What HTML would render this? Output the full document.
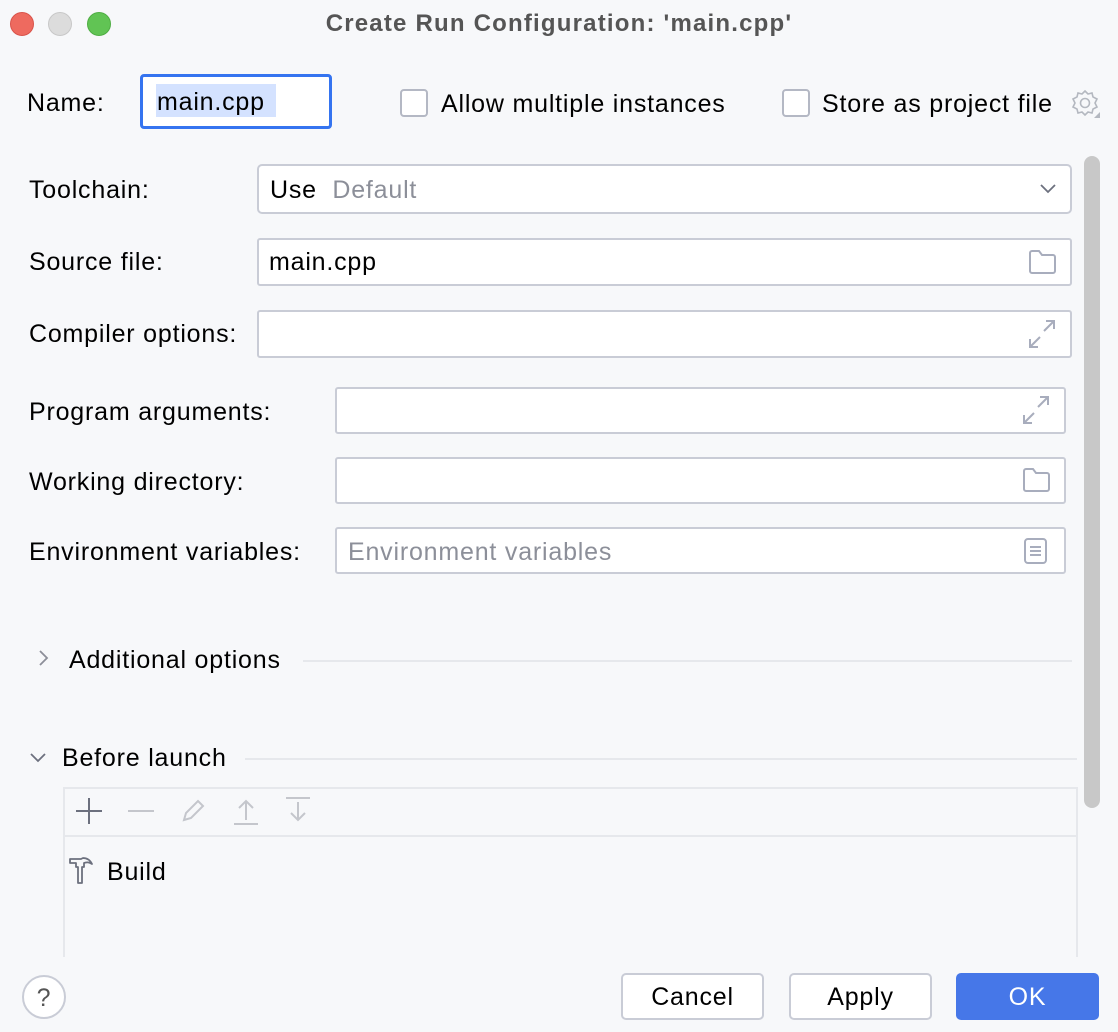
<!DOCTYPE html>
<html><head><meta charset="utf-8"><style>
*{margin:0;padding:0;box-sizing:border-box}
html,body{width:1118px;height:1032px;overflow:hidden;background:#f7f8fa;font-family:"Liberation Sans",sans-serif;font-size:25px;letter-spacing:0.8px;color:#000}
.a{position:absolute}
.t{position:absolute;line-height:30px;white-space:nowrap;margin-top:1px}
.f{position:absolute;background:#fff;border:2px solid #c9ccd6;border-radius:3px}
.g{color:#8c8f99}
.btn{position:absolute;top:973px;width:143px;height:47px;border:2px solid #c9ccd6;border-radius:5px;background:#fff;text-align:center;line-height:45px}
</style></head><body>
<div class="a" style="left:10px;top:12px;width:24px;height:24px;border-radius:50%;background:#ee6a5f;border:1px solid #d9534a"></div>
<div class="a" style="left:48px;top:12px;width:24px;height:24px;border-radius:50%;background:#dcdcdc;border:1px solid #c8c8c8"></div>
<div class="a" style="left:87px;top:12px;width:24px;height:24px;border-radius:50%;background:#61c454;border:1px solid #4fae43"></div>
<div class="t" style="left:0;width:1118px;text-align:center;top:8px;font-weight:bold;color:#555;font-size:24px;letter-spacing:1.2px">Create Run Configuration: 'main.cpp'</div>

<div class="t" style="left:27px;top:87px">Name:</div>
<div class="a" style="left:140px;top:74px;width:192px;height:55px;border:3px solid #3574f0;border-radius:4px;background:#fff"></div>
<div class="a" style="left:156px;top:84px;width:120px;height:33px;background:#d4e2ff"></div>
<div class="t" style="left:157px;top:86px">main.cpp</div>
<div class="a" style="left:400px;top:89px;width:28px;height:28px;border:2px solid #b4b8c4;border-radius:4px;background:#fff"></div>
<div class="t" style="left:441px;top:88px">Allow multiple instances</div>
<div class="a" style="left:782px;top:89px;width:28px;height:28px;border:2px solid #b4b8c4;border-radius:4px;background:#fff"></div>
<div class="t" style="left:822px;top:88px">Store as project file</div>
<svg class="a" style="left:1070px;top:88px" width="30" height="30" viewBox="0 0 30 30"><path d="M15 3l3 3 4-1 1 4 4 2-2 4 2 4-4 2-1 4-4-1-3 3-3-3-4 1-1-4-4-2 2-4-2-4 4-2 1-4 4 1z" fill="none" stroke="#b4b8c0" stroke-width="1.6"/><circle cx="15" cy="15" r="4.5" fill="none" stroke="#b4b8c0" stroke-width="1.6"/><path d="M30 24v6h-6z" fill="#b4b8c0"/></svg>

<div class="t" style="left:29px;top:174px">Toolchain:</div>
<div class="f" style="left:257px;top:164px;width:815px;height:50px;border-radius:5px"></div>
<div class="t" style="left:270px;top:174px">Use&nbsp; <span class="g">Default</span></div>
<svg class="a" style="left:1038px;top:181px" width="20" height="14"><path d="M3 4l7 7 7-7" fill="none" stroke="#6c707e" stroke-width="1.8"/></svg>

<div class="t" style="left:29px;top:246px">Source file:</div>
<div class="f" style="left:257px;top:238px;width:815px;height:48px"></div>
<div class="t" style="left:269px;top:246px">main.cpp</div>
<svg class="a" style="left:1028px;top:249px" width="29" height="26"><path d="M2 4a2 2 0 0 1 2-2h7l3 4h11a2 2 0 0 1 2 2v14a2 2 0 0 1-2 2H4a2 2 0 0 1-2-2z" fill="none" stroke="#a8adbd" stroke-width="2"/></svg>

<div class="t" style="left:29px;top:318px">Compiler options:</div>
<div class="f" style="left:257px;top:310px;width:815px;height:48px"></div>
<svg class="a" style="left:1027px;top:319px" width="30" height="30"><path d="M17 12L27 2M19 2h8v8M13 18L3 28M3 20v8h8" fill="none" stroke="#a8adbd" stroke-width="2"/></svg>

<div class="t" style="left:29px;top:396px">Program arguments:</div>
<div class="f" style="left:335px;top:387px;width:731px;height:47px"></div>
<svg class="a" style="left:1021px;top:395px" width="30" height="30"><path d="M17 12L27 2M19 2h8v8M13 18L3 28M3 20v8h8" fill="none" stroke="#a8adbd" stroke-width="2"/></svg>

<div class="t" style="left:29px;top:466px">Working directory:</div>
<div class="f" style="left:335px;top:457px;width:731px;height:47px"></div>
<svg class="a" style="left:1022px;top:467px" width="29" height="26"><path d="M2 4a2 2 0 0 1 2-2h7l3 4h11a2 2 0 0 1 2 2v14a2 2 0 0 1-2 2H4a2 2 0 0 1-2-2z" fill="none" stroke="#a8adbd" stroke-width="2"/></svg>

<div class="t" style="left:29px;top:536px">Environment variables:</div>
<div class="f" style="left:335px;top:527px;width:731px;height:47px"></div>
<div class="t g" style="left:348px;top:536px">Environment variables</div>
<svg class="a" style="left:1023px;top:537px" width="26" height="28"><rect x="2" y="2" width="21" height="24" rx="3" fill="none" stroke="#a8adbd" stroke-width="2"/><path d="M7 10h11M7 14h11M7 18h11" stroke="#a8adbd" stroke-width="2"/></svg>

<div class="a" style="left:1084px;top:156px;width:16px;height:652px;border-radius:8px;background:#c8c8c8"></div>

<svg class="a" style="left:36px;top:648px" width="14" height="20"><path d="M4 3l7 7-7 7" fill="none" stroke="#8c8f99" stroke-width="1.8"/></svg>
<div class="t" style="left:69px;top:644px">Additional options</div>
<div class="a" style="left:303px;top:660px;width:769px;height:2px;background:#e6e8ec"></div>

<svg class="a" style="left:28px;top:750px" width="20" height="14"><path d="M3 4l7 7 7-7" fill="none" stroke="#6c707e" stroke-width="1.8"/></svg>
<div class="t" style="left:62px;top:742px">Before launch</div>
<div class="a" style="left:245px;top:758px;width:832px;height:2px;background:#e6e8ec"></div>

<div class="a" style="left:63px;top:787px;width:1015px;height:170px;border:2px solid #e6e8ec;border-bottom:none"></div>
<div class="a" style="left:63px;top:835px;width:1015px;height:2px;background:#e6e8ec"></div>
<svg class="a" style="left:74px;top:796px" width="240" height="32"><path d="M15 2v26M2 15h26" stroke="#6c707e" stroke-width="2"/><path d="M54 15h26" stroke="#c4c6cc" stroke-width="2"/><path d="M110 24l2-7 12-12 5 5-12 12z" fill="none" stroke="#c4c6cc" stroke-width="2"/><path d="M160 28h24M172 24V6M165 12l7-7 7 7" fill="none" stroke="#c4c6cc" stroke-width="2"/><path d="M212 2h24M224 6v18M217 17l7 7 7-7" fill="none" stroke="#c4c6cc" stroke-width="2"/></svg>
<svg class="a" style="left:67px;top:855px" width="28" height="30"><path d="M3 4h11l2-1c4 0 7 2 9 6-3-2-5-2-8-1v4h-2v16h-4V12h-2V8H3z" fill="none" stroke="#6c707e" stroke-width="1.8" stroke-linejoin="round"/></svg>
<div class="t" style="left:107px;top:856px">Build</div>

<div class="a" style="left:22px;top:975px;width:44px;height:44px;border-radius:50%;border:2px solid #c9ccd6;background:#fff"></div>
<div class="t" style="left:22px;top:982px;width:44px;text-align:center;color:#555">?</div>

<div class="btn" style="left:621px">Cancel</div>
<div class="btn" style="left:789px">Apply</div>
<div class="btn" style="left:956px;background:#4677e8;border-color:#4677e8;color:#fff">OK</div>
</body></html>
